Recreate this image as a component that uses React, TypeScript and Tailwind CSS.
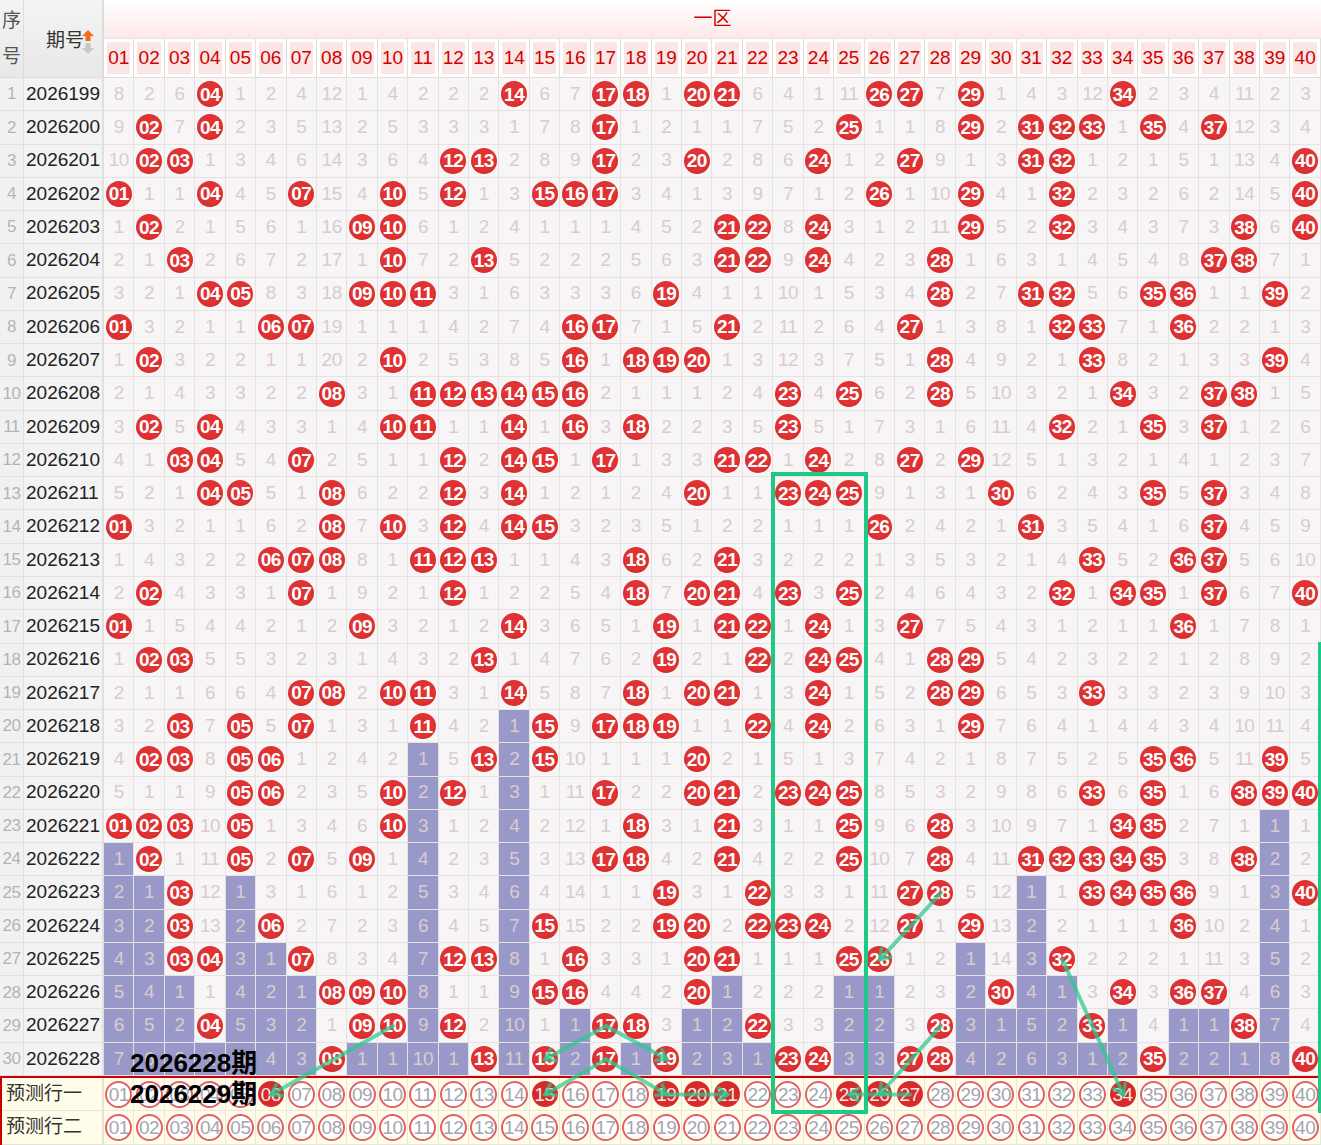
import React from 'react';

const draws: number[][] = [
  [4, 14, 17, 18, 20, 21, 26, 27, 29, 34],
  [2, 4, 17, 25, 29, 31, 32, 33, 35, 37],
  [2, 3, 12, 13, 17, 20, 24, 27, 31, 32, 40],
  [1, 4, 7, 10, 12, 15, 16, 17, 26, 29, 32, 40],
  [2, 9, 10, 21, 22, 24, 29, 32, 38, 40],
  [3, 10, 13, 21, 22, 24, 28, 37, 38],
  [4, 5, 9, 10, 11, 19, 28, 31, 32, 35, 36, 39],
  [1, 6, 7, 16, 17, 21, 27, 32, 33, 36],
  [2, 10, 16, 18, 19, 20, 28, 33, 39],
  [8, 11, 12, 13, 14, 15, 16, 23, 25, 28, 34, 37, 38],
  [2, 4, 10, 11, 14, 16, 18, 23, 32, 35, 37],
  [3, 4, 7, 12, 14, 15, 17, 21, 22, 24, 27, 29],
  [4, 5, 8, 12, 14, 20, 23, 24, 25, 30, 35, 37],
  [1, 8, 10, 12, 14, 15, 26, 31, 37],
  [6, 7, 8, 11, 12, 13, 18, 21, 33, 36, 37],
  [2, 7, 12, 18, 20, 21, 23, 25, 32, 34, 35, 37, 40],
  [1, 9, 14, 19, 21, 22, 24, 27, 36],
  [2, 3, 13, 19, 22, 24, 25, 28, 29],
  [7, 8, 10, 11, 14, 18, 20, 21, 24, 28, 29, 33],
  [3, 5, 7, 11, 15, 17, 18, 19, 22, 24, 29],
  [2, 3, 5, 6, 13, 15, 20, 35, 36, 39],
  [5, 6, 10, 12, 17, 20, 21, 23, 24, 25, 33, 35, 38, 39, 40],
  [1, 2, 3, 5, 10, 18, 21, 25, 28, 34, 35],
  [2, 5, 7, 9, 17, 18, 21, 25, 28, 31, 32, 33, 34, 35, 38],
  [3, 19, 22, 27, 28, 33, 34, 35, 36, 40],
  [3, 6, 15, 19, 20, 22, 23, 24, 27, 29, 36],
  [3, 4, 7, 12, 13, 16, 20, 21, 25, 26, 32],
  [8, 9, 10, 15, 16, 20, 30, 34, 36, 37],
  [4, 9, 10, 12, 17, 18, 22, 28, 33, 38],
  [8, 13, 15, 17, 19, 23, 24, 27, 28, 35, 40],
];

// miss counts of row 1 (0 = drawn)
const init = [
  8, 2, 6, 0, 1, 2, 4, 12, 1, 4, 2, 2, 2, 0, 6, 7, 0, 0, 1, 0,
  0, 6, 4, 1, 11, 0, 0, 7, 0, 1, 4, 3, 12, 0, 2, 3, 4, 11, 2, 3,
];

const predicted = [6, 15, 19, 20, 21, 25, 26, 27, 34];

const nums = Array.from({ length: 40 }, (_, i) => i + 1);
const pad = (n: number) => String(n).padStart(2, '0');

const miss: number[][] = [];
draws.forEach((d, r) => {
  miss.push(
    nums.map((n, c) => (d.includes(n) ? 0 : r === 0 ? init[c] : miss[r - 1][c] + 1))
  );
});
const lastDrawn = nums.map((n) => {
  let last = -1;
  draws.forEach((d, r) => {
    if (d.includes(n)) last = r;
  });
  return last;
});

const COLW = 1217 / 40;
const ROWH = 998 / 30;
const cx = (c: number) => 104 + (c - 0.5) * COLW;
const ry = (r: number) => (r === 31 ? 1094.5 : 78 + (r - 0.5) * ROWH);

const arrows: [number, number, number, number][] = [
  [10, 29, 6, 31],
  [17, 29, 15, 30],
  [17, 29, 19, 30],
  [17, 30, 15, 31],
  [17, 30, 19, 31],
  [19, 31, 21, 31],
  [28, 25, 26, 27],
  [28, 29, 26, 31],
  [27, 31, 25, 31],
  [32, 27, 34, 31],
];

function Ball({ n }: { n: number }) {
  return (
    <div className="w-[26px] h-[26px] rounded-full bg-[radial-gradient(circle_at_50%_45%,#e03232_55%,#c21f1f_100%)] flex items-center justify-center text-white font-bold text-[19px] leading-none tracking-[-0.5px]">
      {pad(n)}
    </div>
  );
}

function SortIcon() {
  return (
    <svg width="12" height="24" viewBox="0 0 12 24" className="shrink-0">
      <path d="M6 0 L12 6 L8.5 6 L8.5 11 L3.5 11 L3.5 6 L0 6 Z" fill="#f26a1b" />
      <path d="M3.5 13 L8.5 13 L8.5 18 L12 18 L6 24 L0 18 L3.5 18 Z" fill="#c8c8c8" />
    </svg>
  );
}

function Overlay() {
  const stroke = 'rgba(45,200,140,0.72)';
  return (
    <svg width="1321" height="1145" className="absolute left-0 top-0 pointer-events-none">
      {arrows.map(([c1, r1, c2, r2], i) => {
        const x1 = cx(c1);
        const y1 = ry(r1);
        const x2 = cx(c2);
        const y2 = ry(r2);
        const a = Math.atan2(y2 - y1, x2 - x1);
        const L = 11;
        const w = 0.6;
        const p1 = [x2 - L * Math.cos(a - w), y2 - L * Math.sin(a - w)];
        const p2 = [x2 - L * Math.cos(a + w), y2 - L * Math.sin(a + w)];
        return (
          <g key={i} stroke={stroke} fill="none" strokeLinecap="round">
            <line x1={x1} y1={y1} x2={x2} y2={y2} strokeWidth="4" />
            <polyline points={`${p1[0]},${p1[1]} ${x2},${y2} ${p2[0]},${p2[1]}`} strokeWidth="3.5" />
          </g>
        );
      })}
      <rect x="773" y="474" width="93" height="638" fill="none" stroke="#1ec886" strokeWidth="4" />
      <line x1="1319.5" y1="642" x2="1319.5" y2="1113" stroke="#1ec886" strokeWidth="3" />
    </svg>
  );
}

export default function App() {
  return (
    <div className="relative w-[1321px] h-[1145px] overflow-hidden bg-white font-['Liberation_Sans','Noto_Sans_CJK_SC',sans-serif]">
      {/* header */}
      <div className="flex h-[78px]">
        <div className="w-[24px] shrink-0 border-r border-b border-[#dcdcdc] bg-[linear-gradient(#f4f4f4,#e8e8e8)] flex flex-col items-center justify-center gap-[10px] text-[19px] leading-[26px] text-[#555]">
          <span>序</span>
          <span>号</span>
        </div>
        <div className="w-[80px] shrink-0 border-r-2 border-b border-[#dcdcdc] bg-[linear-gradient(#f4f4f4,#e8e8e8)] flex items-center justify-end pr-[8px] pt-[6px] text-[19px] text-[#333]">
          <span className="-mr-[2px]">期号</span>
          <SortIcon />
        </div>
        <div className="flex-1 flex flex-col">
          <div className="h-[39px] border-b border-[#e6e2e2] bg-[linear-gradient(#ffffff,#fde8e8)] flex items-center justify-center text-[19px] text-[#cc0000]">
            一区
          </div>
          <div className="h-[39px] flex">
            {nums.map((n) => (
              <div key={n} className="flex-1 min-w-0 border-r border-b border-[#e2dede] bg-white p-[3px]">
                <div className="h-full bg-[#fbe6e6] flex items-center justify-center text-[19px] text-[#d00000]">
                  {pad(n)}
                </div>
              </div>
            ))}
          </div>
        </div>
      </div>

      {/* rows */}
      {draws.map((d, r) => (
        <div key={r} className="flex h-[33.267px]">
          <div className="w-[24px] shrink-0 border-r border-b border-[#e2dfdf] bg-[#f2f1f1] flex items-center justify-center text-[17px] text-[#b4b4b4] tracking-[-0.5px]">
            {r + 1}
          </div>
          <div className="w-[80px] shrink-0 border-r-2 border-b border-[#e2dfdf] bg-[#f4f3f3] flex items-center pl-[2px] text-[19px] text-[#222]">
            {2026199 + r}
          </div>
          {nums.map((n, c) => {
            const hit = d.includes(n);
            const purple = r > lastDrawn[c];
            return (
              <div
                key={n}
                className={`flex-1 min-w-0 border-r border-b border-[#e6e2e2] flex items-center justify-center ${
                  purple ? 'bg-[#9999c9]' : 'bg-[#f7f5f6]'
                }`}
              >
                {hit ? (
                  <Ball n={n} />
                ) : (
                  <span className="text-[19px] text-[#dacccc] tracking-[-0.5px]">{miss[r][c]}</span>
                )}
              </div>
            );
          })}
        </div>
      ))}

      {/* prediction rows */}
      <div className="border-t-2 border-l-2 border-[#cc0000] bg-[#fffdea]">
        {['预测行一', '预测行二'].map((label, i) => (
          <div key={label} className="flex h-[33.5px]">
            <div className="w-[102px] shrink-0 border-r-2 border-b border-[#e6e2d8] flex items-center pl-[4px] text-[19px] text-[#333]">
              {label}
            </div>
            {nums.map((n) => {
              const filled = i === 0 && predicted.includes(n);
              return (
                <div key={n} className="flex-1 min-w-0 border-r border-b border-[#ebe7dc] flex items-center justify-center">
                  {filled ? (
                    <div className="w-[26px] h-[26px] rounded-full bg-[#d82a2a] flex items-center justify-center text-[19px] leading-none text-[#f4eaea] tracking-[-0.5px]">
                      {pad(n)}
                    </div>
                  ) : (
                    <div className="w-[27px] h-[27px] rounded-full border-2 border-[#e06262] bg-white flex items-center justify-center text-[19px] leading-none text-[#a3a6ae] tracking-[-0.5px]">
                      {pad(n)}
                    </div>
                  )}
                </div>
              );
            })}
          </div>
        ))}
      </div>

      <Overlay />

      <div className="absolute left-[130px] top-[1048px] text-[26px] font-bold leading-[30px] text-black">
        2026228期
      </div>
      <div className="absolute left-[130px] top-[1079px] text-[26px] font-bold leading-[30px] text-black">
        2026229期
      </div>
    </div>
  );
}
